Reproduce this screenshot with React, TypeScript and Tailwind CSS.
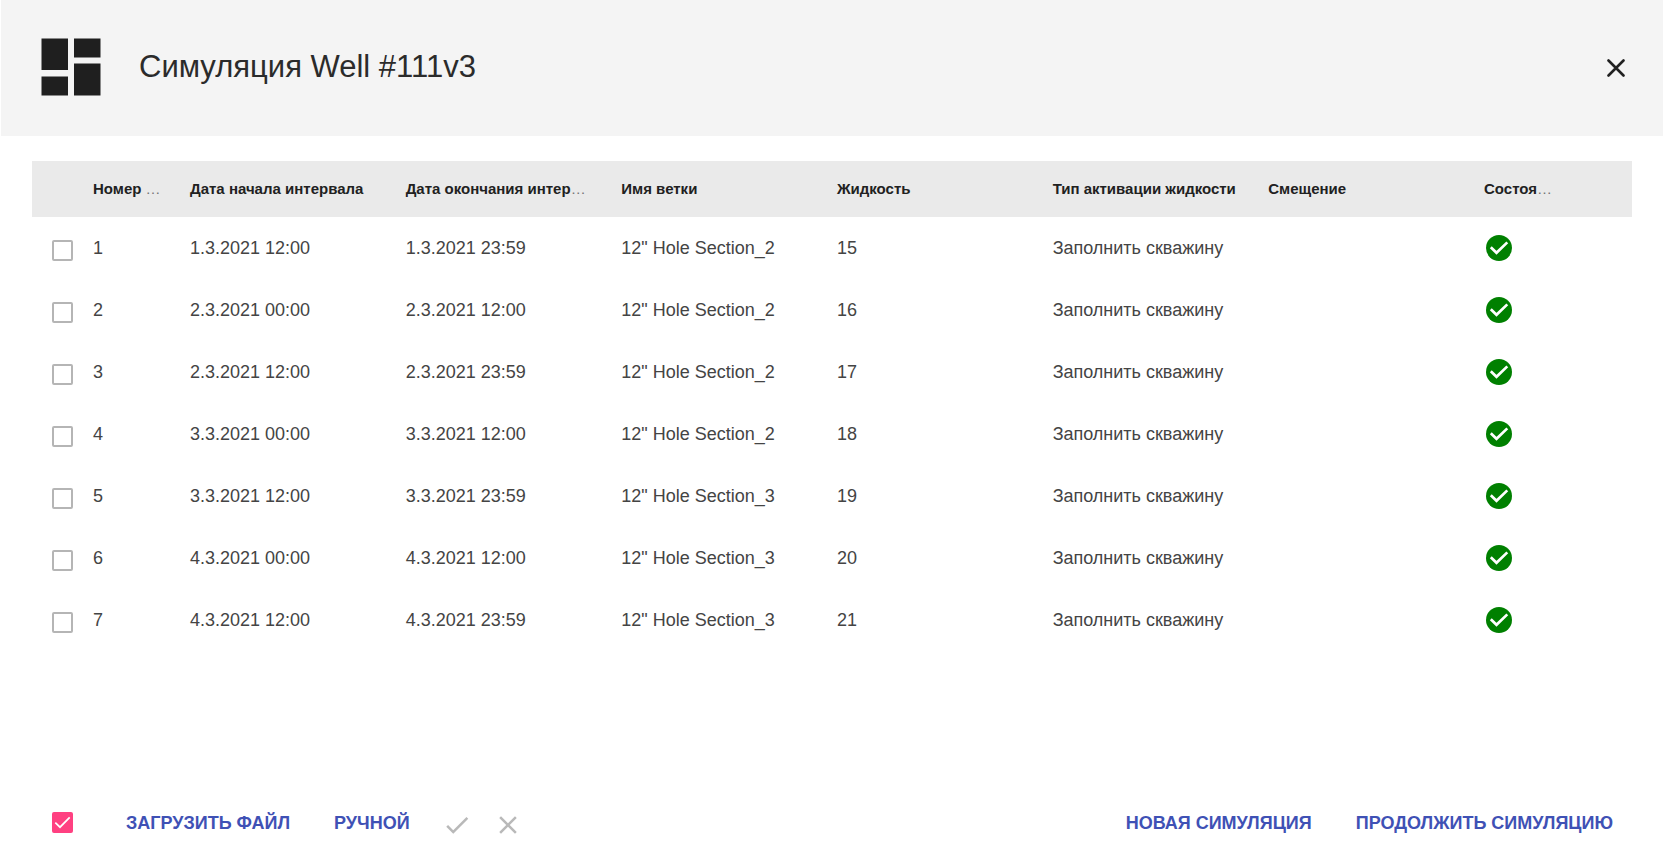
const columns = [
  { label: 'Номер ', clipped: true },
  { label: 'Дата начала интервала', clipped: false },
  { label: 'Дата окончания интер', clipped: true },
  { label: 'Имя ветки', clipped: false },
  { label: 'Жидкость', clipped: false },
  { label: 'Тип активации жидкости', clipped: false },
  { label: 'Смещение', clipped: false },
  { label: 'Состоя', clipped: true },
];

const rows = [
  { id: 1, start: '1.3.2021 12:00', end: '1.3.2021 23:59', branch: '12" Hole Section_2', fluid: 15 },
  { id: 2, start: '2.3.2021 00:00', end: '2.3.2021 12:00', branch: '12" Hole Section_2', fluid: 16 },
  { id: 3, start: '2.3.2021 12:00', end: '2.3.2021 23:59', branch: '12" Hole Section_2', fluid: 17 },
  { id: 4, start: '3.3.2021 00:00', end: '3.3.2021 12:00', branch: '12" Hole Section_2', fluid: 18 },
  { id: 5, start: '3.3.2021 12:00', end: '3.3.2021 23:59', branch: '12" Hole Section_3', fluid: 19 },
  { id: 6, start: '4.3.2021 00:00', end: '4.3.2021 12:00', branch: '12" Hole Section_3', fluid: 20 },
  { id: 7, start: '4.3.2021 12:00', end: '4.3.2021 23:59', branch: '12" Hole Section_3', fluid: 21 },
];

function DashboardIcon() {
  return (
    <svg viewBox="0 0 60 58" className="h-[58px] w-[60px] shrink-0" fill="#1f1f1f" aria-hidden="true">
      <path d="M0.500 0.500h26.500v31.500H0.500zM33 0.500h26.500v19H33zM0.500 38.500h26.500V57.500H0.500zM33 25.500h26.500v32H33z" />
    </svg>
  );
}

function CloseIcon() {
  return (
    <svg viewBox="0 0 18 18" className="size-[18px]" fill="none" stroke="currentColor" strokeWidth="2.600" strokeLinecap="round" aria-hidden="true">
      <path d="M1.500 1.500l15 15M16.500 1.500l-15 15" />
    </svg>
  );
}

function CrossIcon() {
  return (
    <svg viewBox="0 0 24 24" className="size-[30px]" fill="currentColor" aria-hidden="true">
      <path d="M19 6.410 17.590 5 12 10.590 6.410 5 5 6.410 10.590 12 5 17.590 6.410 19 12 13.410 17.590 19 19 17.590 13.410 12z" />
    </svg>
  );
}

function TickIcon() {
  return (
    <svg viewBox="0 0 24 24" className="size-[30px]" fill="currentColor" aria-hidden="true">
      <path d="M9 16.170 4.830 12l-1.420 1.410L9 19 21 7l-1.410-1.410z" />
    </svg>
  );
}

function DoneIcon() {
  return (
    <svg viewBox="0 0 26 26" className="ml-0.5 block size-[26px]" role="img" aria-label="Готово">
      <circle cx="13" cy="13" r="13" fill="#008000" />
      <path d="M4.800 12.300l5.700 5.500L21.300 7.400" fill="none" stroke="#fff" strokeWidth="2.700" />
    </svg>
  );
}

function TextButton({ children }: { children: string }) {
  return (
    <button type="button" className="text-lg leading-6 font-bold whitespace-nowrap text-[#3f51b5]">
      {children}
    </button>
  );
}

export default function App() {
  return (
    <div className="flex min-h-screen flex-col bg-white font-['Liberation_Sans',Arial,sans-serif] text-[#212121]">
      <header className="mx-px flex h-[136px] items-center justify-between bg-[#f4f4f4] pr-8 pl-10">
        <div className="flex items-center gap-[38px] pb-0.5">
          <DashboardIcon />
          <h1 className="text-[31px] leading-9 text-[#2b2b2b]">Симуляция Well #111v3</h1>
        </div>
        <button type="button" aria-label="Закрыть" className="flex size-[30px] items-center justify-center">
          <CloseIcon />
        </button>
      </header>

      <main className="px-8 pt-[25px]">
        <table className="w-full table-fixed border-collapse text-left">
          <colgroup>
            <col className="w-[49px]" />
            <col className="w-[97px]" />
            <col span={6} />
            <col className="w-[160px]" />
          </colgroup>
          <thead>
            <tr className="h-14 bg-[#eaeaea]">
              <td />
              {columns.map(({ label, clipped }) => (
                <th key={label} className="px-3 text-[15px] leading-5 font-bold whitespace-pre">
                  {label}
                  {clipped && <span className="font-normal text-[#757575]">…</span>}
                </th>
              ))}
            </tr>
          </thead>
          <tbody className="text-lg leading-6 text-[#444]">
            {rows.map((row) => (
              <tr key={row.id} className="h-[62px]">
                <td className="pt-1 pl-5">
                  <input
                    type="checkbox"
                    aria-label={`Интервал ${row.id}`}
                    className="block size-[21px] appearance-none rounded-[2px] border-2 border-[#b5b5b5] bg-white checked:bg-[#ff4081]"
                  />
                </td>
                <td className="px-3">{row.id}</td>
                <td className="px-3">{row.start}</td>
                <td className="px-3">{row.end}</td>
                <td className="px-3">{row.branch}</td>
                <td className="px-3">{row.fluid}</td>
                <td className="px-3">Заполнить скважину</td>
                <td className="px-3" />
                <td className="px-3">
                  <DoneIcon />
                </td>
              </tr>
            ))}
          </tbody>
        </table>
      </main>

      <footer className="mt-auto flex h-[74px] items-center justify-between pr-[51px] pl-[52px]">
        <div className="flex items-center">
          <label className="relative mr-[53px] mb-0.5 block size-[21px]">
            <input
              type="checkbox"
              defaultChecked
              aria-label="Выбрать все"
              className="peer block size-[21px] appearance-none rounded-[2px] border-2 border-[#b5b5b5] checked:border-[#ff4081] checked:bg-[#ff4081]"
            />
            <svg
              viewBox="0 0 21 21"
              className="pointer-events-none absolute inset-0 hidden size-[21px] peer-checked:block"
              fill="none"
              stroke="#fff"
              strokeWidth="1.700"
              aria-hidden="true"
            >
              <path d="M3.300 10.700l4.700 4.500L17.700 5.300" />
            </svg>
          </label>
          <div className="flex items-center gap-11">
            <TextButton>ЗАГРУЗИТЬ ФАЙЛ</TextButton>
            <TextButton>РУЧНОЙ</TextButton>
          </div>
          <div className="ml-8 flex items-center gap-[21px] pt-1 text-[#b9b9b9]">
            <button type="button" aria-label="Применить" disabled>
              <TickIcon />
            </button>
            <button type="button" aria-label="Отменить" disabled>
              <CrossIcon />
            </button>
          </div>
        </div>
        <div className="flex items-center gap-11">
          <TextButton>НОВАЯ СИМУЛЯЦИЯ</TextButton>
          <TextButton>ПРОДОЛЖИТЬ СИМУЛЯЦИЮ</TextButton>
        </div>
      </footer>
    </div>
  );
}
